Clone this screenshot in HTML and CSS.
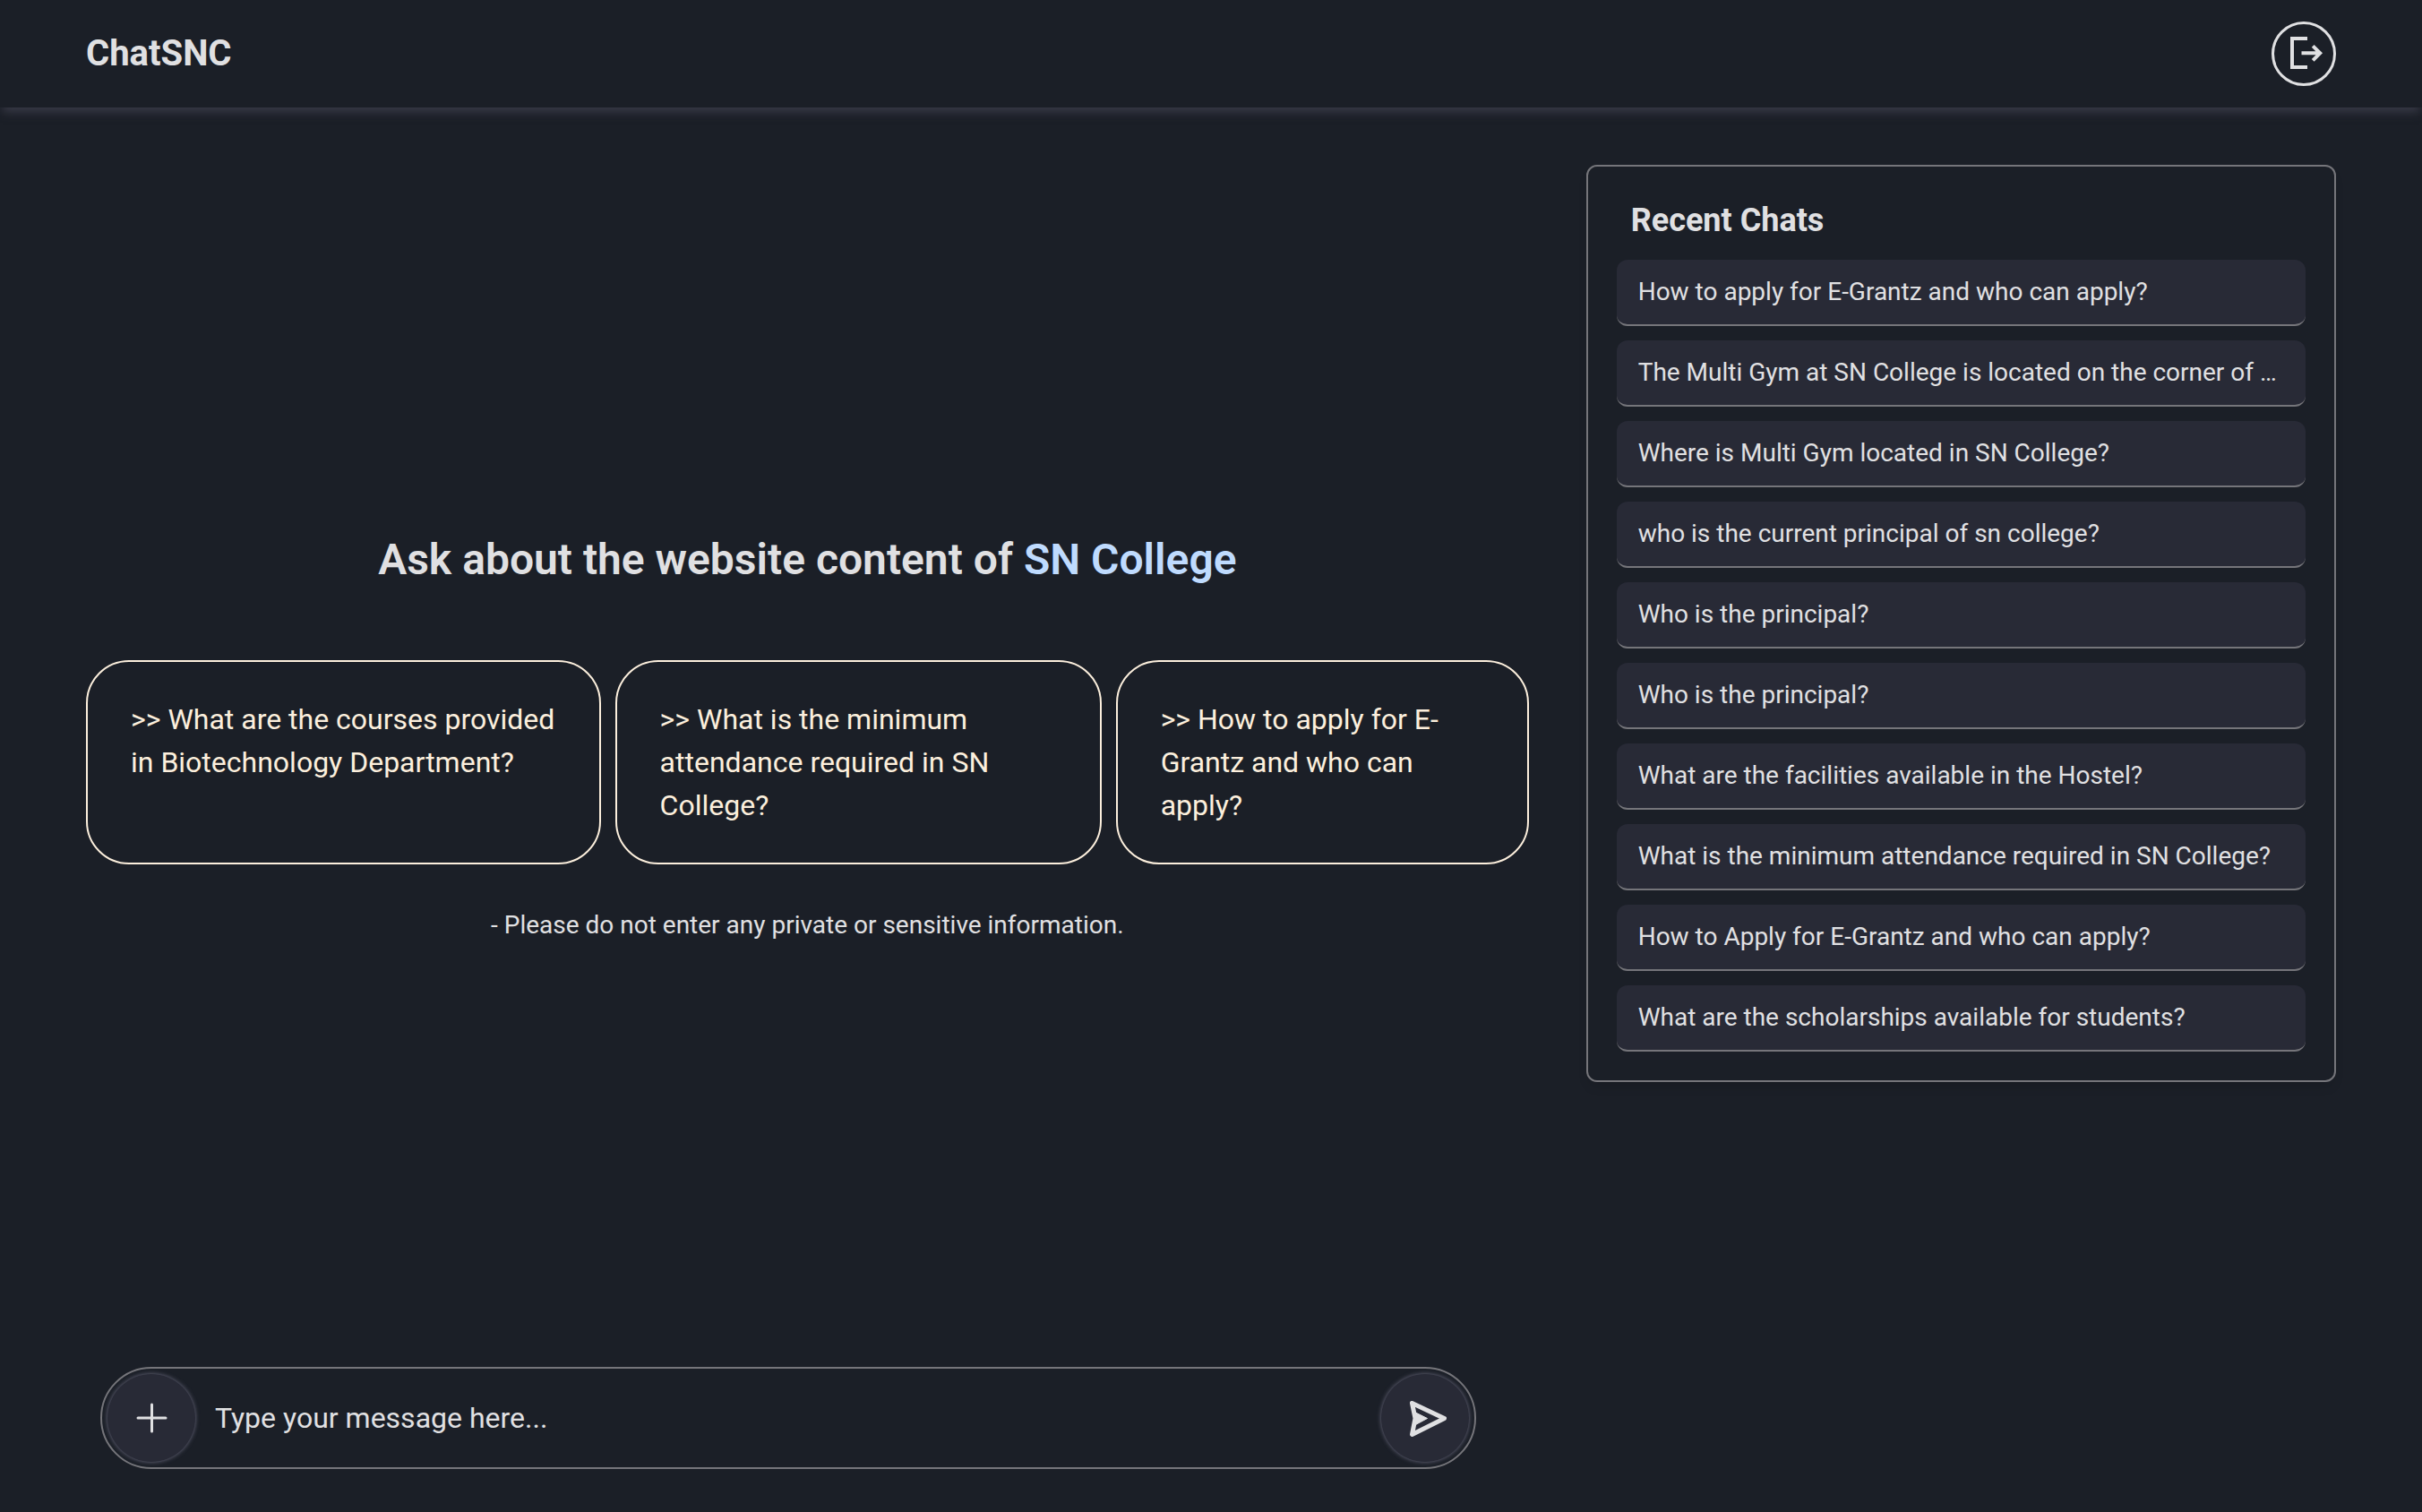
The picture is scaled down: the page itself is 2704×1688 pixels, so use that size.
FILE: index.html
```html
<!DOCTYPE html>
<html lang="en">
<head>
  <meta charset="utf-8">
  <meta name="viewport" content="width=device-width, initial-scale=1">
  <title>ChatSNC</title>
  <link rel="stylesheet" href="styles.css">
</head>
<body>
  <header class="topbar">
    <h1 class="brand">ChatSNC</h1>
    <button class="logout" type="button" aria-label="Log out">
      <svg class="logout-icon" viewBox="0 0 48 48" aria-hidden="true">
        <path d="M28 7H11V39H28M21.5 23.3H42M34.2 15.3L42.2 23.3L34.2 31.3"/>
      </svg>
    </button>
  </header>
  <main class="layout">
    <section class="chat">
      <div class="hero">
        <h2 class="title">Ask about the website content of <span class="accent">SN College</span></h2>
        <div class="prompts">
          <button class="prompt" type="button">&gt;&gt; What are the courses provided in Biotechnology Department?</button>
          <button class="prompt" type="button">&gt;&gt; What is the minimum attendance required in SN College?</button>
          <button class="prompt" type="button">&gt;&gt; How to apply for E-Grantz and who can apply?</button>
        </div>
        <p class="note">- Please do not enter any private or sensitive information.</p>
      </div>
      <form class="composer">
        <button class="round" type="button" aria-label="New chat">
          <svg class="round-icon plus" viewBox="0 0 56 56" aria-hidden="true"><path d="M28.5 13V43M13 28H44"/></svg>
        </button>
        <input class="message" type="text" aria-label="Message" placeholder="Type your message here...">
        <button class="round" type="submit" aria-label="Send">
          <svg class="round-icon send" viewBox="0 0 56 56" aria-hidden="true">
            <path d="M13.5 11.5L49.5 28.5L13.5 46.5L17 28.5Z"/>
            <path class="fill" d="M17.5 22L30.5 28.5L17.5 35.5Z"/>
          </svg>
        </button>
      </form>
    </section>
    <aside class="recent">
      <h2 class="recent-title">Recent Chats</h2>
      <ul class="recent-list">
        <li><a class="recent-item" href="#">How to apply for E-Grantz and who can apply?</a></li>
        <li><a class="recent-item" href="#">The Multi Gym at SN College is located on the corner of …</a></li>
        <li><a class="recent-item" href="#">Where is Multi Gym located in SN College?</a></li>
        <li><a class="recent-item" href="#">who is the current principal of sn college?</a></li>
        <li><a class="recent-item" href="#">Who is the principal?</a></li>
        <li><a class="recent-item" href="#">Who is the principal?</a></li>
        <li><a class="recent-item" href="#">What are the facilities available in the Hostel?</a></li>
        <li><a class="recent-item" href="#">What is the minimum attendance required in SN College?</a></li>
        <li><a class="recent-item" href="#">How to Apply for E-Grantz and who can apply?</a></li>
        <li><a class="recent-item" href="#">What are the scholarships available for students?</a></li>
      </ul>
    </aside>
  </main>
</body>
</html>
```
FILE: styles.css
```css
* {
  box-sizing: border-box;
}

body {
  margin: 0;
  min-height: 100vh;
  display: flex;
  flex-direction: column;
  background: #1b1f27;
  color: #e0e0e2;
  font-family: Roboto, "Liberation Sans", sans-serif;
  font-size: 28px;
  line-height: 40px;
}

h1, h2, p, ul {
  margin: 0;
  padding: 0;
}

button, input {
  font: inherit;
  color: inherit;
  background: none;
  border: 0;
  margin: 0;
  padding: 0;
}

button {
  cursor: pointer;
}

.topbar {
  display: flex;
  align-items: center;
  justify-content: space-between;
  padding: 24px 96px;
  box-shadow: 0 8px 10px -3px #393a47;
  background: #1b1f27;
}

.brand {
  font-size: 40px;
  line-height: 56px;
  font-weight: 700;
}

.logout {
  display: flex;
  align-items: center;
  justify-content: center;
  width: 72px;
  height: 72px;
  border: 3px solid #e0e0e2;
  border-radius: 50%;
}

.logout-icon {
  flex: none;
  width: 48px;
  height: 48px;
  fill: none;
  stroke: #e0e0e2;
  stroke-width: 4;
}

.layout {
  flex: 1;
  display: grid;
  grid-template-columns: 1fr calc(100% / 3);
  gap: 64px;
  padding: 0 96px;
}

.chat {
  display: flex;
  flex-direction: column;
  padding-bottom: 48px;
}

.hero {
  flex: 1;
  display: flex;
  flex-direction: column;
  justify-content: center;
}

.title {
  font-size: 48px;
  line-height: 64px;
  font-weight: 600;
  text-align: center;
}

.accent {
  color: #bfdbfe;
}

.prompts {
  display: flex;
  gap: 16px;
  margin-top: 80px;
}

.prompt {
  display: flex;
  padding: 40px 48px;
  border: 2px solid #fcefdd;
  border-radius: 48px;
  color: #fcefdd;
  font-size: 32px;
  line-height: 48px;
  text-align: left;
}

.note {
  margin-top: 48px;
  text-align: center;
}

.composer {
  display: flex;
  align-items: center;
  max-width: 1536px;
  margin: 0 16px;
  padding: 6px;
  border: 2px solid #75757a;
  border-radius: 57px;
}

.round {
  flex: none;
  display: flex;
  align-items: center;
  justify-content: center;
  width: 98px;
  height: 98px;
  border-radius: 50%;
  background: #282a36;
  box-shadow: 0 0 5px #6c6c80;
}

.round-icon {
  width: 56px;
  height: 56px;
  fill: none;
  stroke: #e0e0e2;
  stroke-linecap: round;
  stroke-linejoin: round;
}

.plus {
  stroke-width: 3;
}

.send {
  stroke-width: 5;
}

.fill {
  fill: #e0e0e2;
  stroke-width: 1;
}

.message {
  flex: 1;
  min-width: 0;
  height: 98px;
  padding: 0 22px;
  font-size: 32px;
  outline: none;
}

.message::placeholder {
  color: #e0e0e2;
  opacity: 1;
}

.recent {
  align-self: start;
  min-width: 0;
  margin-top: 64px;
  padding: 32px;
  border: 2px solid #75757a;
  border-radius: 12px;
  box-shadow: 0 8px 12px -2px rgba(0, 0, 0, 0.1);
}

.recent-title {
  padding: 0 16px;
  font-size: 36px;
  line-height: 56px;
  font-weight: 700;
}

.recent-list {
  display: flex;
  flex-direction: column;
  gap: 16px;
  margin-top: 16px;
  list-style: none;
}

.recent-item {
  display: block;
  padding: 16px 24px;
  overflow: hidden;
  border-bottom: 2px solid #75757a;
  border-radius: 12px;
  background: #282a36;
  color: inherit;
  text-decoration: none;
  text-overflow: ellipsis;
  white-space: nowrap;
}
```
